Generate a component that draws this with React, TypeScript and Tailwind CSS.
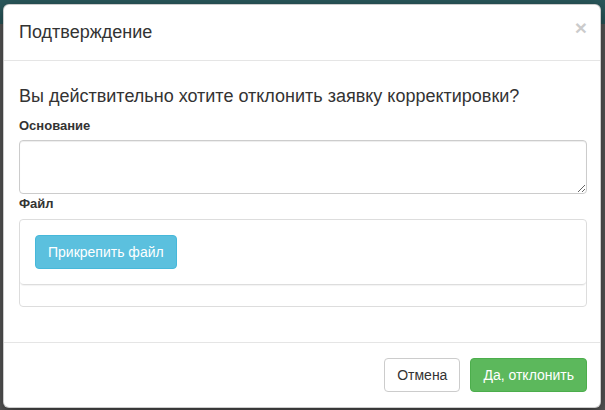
export default function App() {
  return (
    <div
      className="min-h-[410px] w-[605px] overflow-hidden bg-[linear-gradient(#2a585c_0,#2a585c_24px,#595959_24px)] pt-[4px] pl-[3px]"
      style={{ fontFamily: '"Liberation Sans", Arial, Helvetica, sans-serif' }}
    >
      <div className="w-[598px] overflow-hidden rounded-[6px] border border-black/20 bg-white text-[#333] shadow-[0_5px_15px_rgba(0,0,0,0.5)]">
        {/* header */}
        <div className="flex items-start justify-between border-b border-[#e5e5e5] pt-[14px] pb-[15px] pl-[15px] pr-[13px]">
          <h4 className="text-[18px] leading-[26px] text-[#333]">Подтверждение</h4>
          <button className="mt-[-2px] text-[21px] font-bold leading-[21px] text-black opacity-20">
            ×
          </button>
        </div>

        {/* body */}
        <div className="pl-[15px] pr-[13px] pt-[15px] pb-[15px]">
          <h4 className="mt-[10px] mb-[10px] text-[18px] leading-[20px]">
            Вы действительно хотите отклонить заявку корректировки?
          </h4>
          <label className="mb-[5px] block text-[13px] font-bold leading-[19px]">Основание</label>
          <textarea className="block h-[54px] w-full rounded-[4px] border border-[#ccc] px-[12px] py-[6px] text-[14px] shadow-[inset_0_1px_1px_rgba(0,0,0,0.075)] outline-none" />
          <label className="mb-[6px] block text-[13px] font-bold leading-[19px]">Файл</label>
          <div className="mb-[20px] rounded-[4px] border border-[#ddd]">
            <div className="rounded-[4px] border-b border-[#ddd] p-[15px] shadow-[0_1px_1px_rgba(0,0,0,0.05)]">
              <button className="h-[34px] rounded-[4px] border border-[#46b8da] bg-[#5bc0de] px-[12px] text-[14px] text-white">
                Прикрепить файл
              </button>
            </div>
            <div className="h-[21px]" />
          </div>
        </div>

        {/* footer */}
        <div className="flex justify-end gap-[10px] border-t border-[#e5e5e5] pt-[15px] pb-[15px] pl-[15px] pr-[13px]">
          <button className="h-[34px] rounded-[4px] border border-[#ccc] bg-white px-[12px] text-[14px] text-[#333]">
            Отмена
          </button>
          <button className="h-[34px] rounded-[4px] border border-[#4cae4c] bg-[#5cb85c] px-[12px] text-[14px] text-white">
            Да, отклонить
          </button>
        </div>
      </div>
    </div>
  );
}
